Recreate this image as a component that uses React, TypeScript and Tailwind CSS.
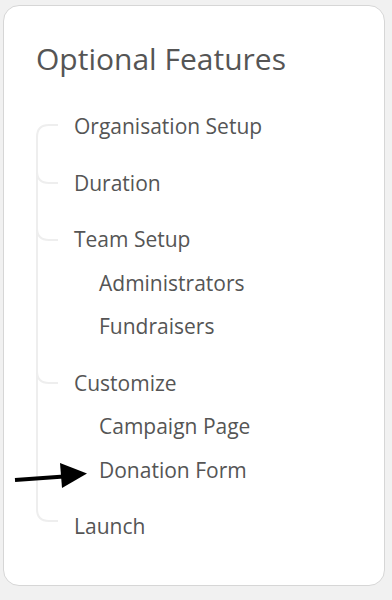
type Step = { label: string; children?: string[] };

const steps: Step[] = [
  { label: 'Organisation Setup' },
  { label: 'Duration' },
  { label: 'Team Setup', children: ['Administrators', 'Fundraisers'] },
  { label: 'Customize', children: ['Campaign Page', 'Donation Form'] },
  { label: 'Launch' },
];

function TreeLines() {
  // the grey connector drawn down the left of the steps
  return (
    <svg className="absolute left-0 top-0 pointer-events-none" width="392" height="600" fill="none">
      <g stroke="#eeeeee" strokeWidth="2">
        <path d="M58 125 H49 Q37 125 37 137 V509 Q37 521 49 521 H58" />
        <path d="M37 171 Q37 183 49 183 H58" />
        <path d="M37 228 Q37 240 49 240 H58" />
        <path d="M37 371 Q37 383 49 383 H58" />
      </g>
      <path d="M15 480 L64 476.5" stroke="#000" strokeWidth="4" />
      <path d="M60 463 L87 473.5 L62 488 Z" fill="#000" />
    </svg>
  );
}

export default function App() {
  return (
    <div
      className="relative w-[392px] h-[600px] bg-[#f1f1f1] pt-[5px] pl-[3px]"
      style={{ fontFamily: '"Open Sans", "Noto Sans", sans-serif' }}
    >
      <div className="w-[382px] h-[581px] bg-white border border-[#d6d6d6] rounded-[16px] px-8">
        <h1 className="pt-[32px] text-[30px] leading-[41px] text-[#555555]">Optional Features</h1>

        <ul className="mt-[26px] ml-[38px] text-[21px] text-[#555555]">
          {steps.map((step, i) => (
            <li key={step.label} className={i > 0 ? 'mt-[13px]' : ''}>
              <div className="h-[43.5px] leading-[43.5px]">{step.label}</div>
              {step.children?.map((child) => (
                <div key={child} className="h-[43.5px] leading-[43.5px] pl-[25px]">
                  {child}
                </div>
              ))}
            </li>
          ))}
        </ul>
      </div>
      <TreeLines />
    </div>
  );
}
